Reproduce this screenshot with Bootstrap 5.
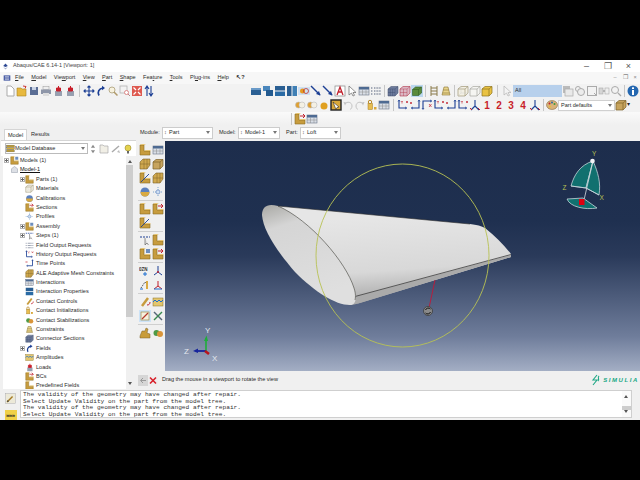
<!DOCTYPE html>
<html lang="en">
<head>
    <meta charset="UTF-8">
    <meta name="viewport" content="width=device-width, initial-scale=1.0">
    <title>Abaqus/CAE 6.14-1</title>
    <link href="https://cdn.jsdelivr.net/npm/bootstrap@5.3.0/dist/css/bootstrap.min.css" rel="stylesheet">
    <style>
        html, body { background: #000; margin: 0; overflow: hidden; }
        .cae-window { width: 640px; height: 360px; margin-top: 60px; background: #f0f0f0; color: #2a2a2a; font: 5.55px/1 "Liberation Sans", sans-serif; overflow: hidden; }
        .title-strip { height: 12px; background: #fff; padding-left: 2px; padding-right: 1px; color: #444; }
        .title-strip .win-btn { width: 21px; text-align: center; font-size: 9px; color: #555; }
        .menu-strip { height: 12px; background: #f7f7f7; padding-left: 3px; }
        .menu-strip span.entry { padding-left: 4px; padding-right: 3.4px; }
        .menu-strip .mdi { width: 10px; text-align: center; color: #888; }
        .tool-strip { height: 14px; background: #f2f2f2; }
        .strip-low { height: 13px; background: linear-gradient(#fafafa, #f0f0f0); }
        .tool { width: 12px; height: 12px; flex: none; display: block; }
        .ic-7 { width: 7px; height: 7px; }
        .ic-8 { width: 8px; height: 8px; }
        .ic-9 { width: 9px; height: 9px; }
        .ic-narrow { width: 10px; }
        .ic-msg { width: 11px; height: 13px; }
        .tool-sep { width: 1px; height: 12px; background: #c6c6c6; margin: 0 2px; flex: none; }
        .sep-wide { margin: 0 3px; }
        .sep-far { margin: 0 3px 0 4px; }
        .pad-a { width: 4px; flex: none; }
        .pad-b { width: 95px; flex: none; }
        .pad-c { width: 294px; flex: none; }
        .pad-d { width: 289px; flex: none; }
        .all-box { width: 49px; height: 12px; background: #b7d0ec; padding: 3px 2px; flex: none; }
        .combo-flat { width: 57px; height: 11px; background: #fff; border: 1px solid #d0d0d0; padding: 2px 2px; flex: none; position: relative; }
        .combo-flat::after, .mod-combo::after, .db-combo::after { content: ""; position: absolute; right: 2px; top: 3px; border: 2.5px solid transparent; border-top: 3px solid #777; }
        .main-area { height: 264px; }
        .left-pane { width: 136px; flex: none; background: #f0f0f0; }
        .tab-row { height: 15px; padding: 4px 0 0 4px; }
        .tab-on, .tab-off { height: 11px; padding: 3px 3px 0; }
        .tab-on { background: #fff; border: 1px solid #d5d5d5; border-bottom: 0; }
        .tab-off { background: #f0f0f0; padding-left: 4px; }
        .db-row { height: 16px; background: #fff; border-top: 1px solid #d5d5d5; padding: 2px 3px 0 4px; margin-left: 1px; }
        .db-combo { width: 83px; height: 11px; background: #fff; border: 1px solid #bbb; position: relative; flex: none; }
        .tree-box { height: 233px; margin: 0 3px 0 3px; background: #fff; overflow: hidden; position: relative; }
        .tree-line { height: 9.4px; white-space: nowrap; position: relative; line-height: 9.4px; }
        .tree-line svg { width: 9px; height: 9px; position: absolute; top: 0; }
        .tree-line .plus { position: absolute; width: 5px; height: 5px; border: 1px solid #b5b5b5; top: 2px; }
        .tree-line .plus::before { content: ""; position: absolute; left: 0; width: 3px; top: 1px; height: 1px; background: #666; }
        .tree-line .plus::after { content: ""; position: absolute; top: 0; height: 3px; left: 1px; width: 1px; background: #666; }
        .tree-line b { font-weight: 400; position: absolute; left: 33px; }
        .depth-top b { left: 17px; }
        .depth-top svg { left: 7px; }
        .depth-kid svg { left: 22px; }
        .depth-kid .plus { left: 17px; }
        .depth-top .plus { left: 1px; }
        .under-mark b { text-decoration: underline; text-decoration-thickness: 1px; color: #111; }
        .scroll-rail { position: absolute; right: 0; top: 0; bottom: 0; width: 7px; background: #f0f0f0; }
        .scroll-thumb { position: absolute; left: 0; right: 0; top: 9px; height: 152px; background: #cdcdcd; }
        .scroll-rail i { position: absolute; left: 1.5px; border: 2px solid transparent; }
        .rail-up { top: 2px; border-bottom: 3px solid #555 !important; }
        .rail-down { bottom: 2px; border-top: 3px solid #555 !important; }
        .mod-row { height: 16px; padding: 2px 0 0 4px; background: #f0f0f0; }
        .mod-combo { height: 12px; background: #fff; border: 1px solid #ccc; padding: 2px 0 0 6px; margin-right: 6px; position: relative; flex: none; }
        .mod-combo::before { content: "\2195"; position: absolute; left: 1px; top: 2px; color: #555; }
        .mod-label { padding-top: 3px; flex: none; }
        .lab-module { width: 22px; }
        .lab-model { width: 19px; }
        .lab-part { width: 14px; }
        .w-part { width: 51px; }
        .w-model { width: 42px; }
        .w-loft { width: 41px; }
        .work-row { height: 230px; }
        .tool-box { width: 29px; flex: none; padding: 1px 2px 0; }
        .box-grid { display: grid; grid-template-columns: 13px 13px; gap: 2px 0; border-bottom: 1px solid #cfcfcf; padding: 2px 0; justify-items: center; }
        .box-grid:last-child { border: 0; }
        .box-grid .tool { width: 12px; height: 12px; }
        .picked { background: #cde3f7; }
        .view-area { flex: 1; position: relative; background: linear-gradient(#1d2d4c 0%, #1f3050 35%, #2a3a5a 50%, #6f7d9b 85%, #a3aec4 100%); overflow: hidden; }
        .view-area svg { display: block; width: 475px; height: 230px; }
        .view-area text { font: 8px "Liberation Sans", sans-serif; }
        .view-area text.cube-mark { font-size: 6.5px; }
        .prompt-bar { height: 18px; padding: 0 1px 0 2px; }
        .prompt-btn { width: 10px; height: 11px; flex: none; }
        .simulia-word { color: #20a886; font: italic 700 6px "Liberation Sans", sans-serif; letter-spacing: 1.6px; padding-left: 2px; }
        .msg-row { height: 31px; padding-left: 3px; }
        .msg-icons { width: 17px; flex: none; padding: 3px 3px 0 2px; gap: 5px; }
        .msg-go { height: 10px; background: #f0d048; color: #222; font-weight: 700; font-size: 6px; padding: 2px 0 0 1px; letter-spacing: -.5px; }
        .msg-text { width: 612px; height: 28px; margin-top: 1px; background: #fff; border: 1px solid #cfcfcf; font: 6.17px/6.55px "Liberation Mono", monospace; padding: 1px 2px; color: #333; position: relative; }
        .msg-text .scroll-rail { right: 0; width: 9px; background: #fafafa; }
        .msg-text .scroll-thumb { top: 15px; height: 4px; }
    </style>
</head>
<body>
<svg width="0" height="0" class="position-absolute">
    <defs>
        <symbol id="new" viewBox="0 0 12 12"><path d="M3 1h4l3 3v7H3z" fill="#fff" stroke="#aaa"/></symbol>
        <symbol id="open" viewBox="0 0 12 12"><path d="M1 3h4l1 1h4v7H1z" fill="#e8b93e" stroke="#a98324" stroke-width=".6"/><path d="M7 1l3 .5-1 2" fill="none" stroke="#c33"/></symbol>
        <symbol id="save" viewBox="0 0 12 12"><rect x="2" y="2" width="8" height="8" fill="#5a6d94"/><rect x="4" y="2" width="4" height="3" fill="#c8d2e4"/></symbol>
        <symbol id="print" viewBox="0 0 12 12"><rect x="3" y="1.500" width="6" height="3" fill="#eee" stroke="#999" stroke-width=".5"/><rect x="1" y="4.500" width="10" height="4.500" fill="#8e96a8"/><rect x="3" y="8" width="6" height="3" fill="#ddd"/></symbol>
        <symbol id="pr1" viewBox="0 0 12 12"><rect x="3" y="6" width="7" height="5" fill="#98a0b0"/><path d="M6.500 1v4M4.500 3h4v3h-4z" stroke="#c81e2a" fill="#c81e2a"/></symbol>
        <symbol id="pan" viewBox="0 0 12 12"><path d="M6 1v10M1 6h10M4.500 2.500L6 1l1.500 1.500M4.500 9.500L6 11l1.500-1.500M2.500 4.500L1 6l1.500 1.500M9.500 4.500L11 6 9.500 7.500" fill="none" stroke="#1c3f94" stroke-width="1.100"/></symbol>
        <symbol id="rot" viewBox="0 0 12 12"><path d="M4 10.500C2 7 4 3.500 8 3" fill="none" stroke="#1c3f94" stroke-width="1.700"/><path d="M7 .8L10 3 7 5.200z" fill="#1c3f94"/></symbol>
        <symbol id="mag" viewBox="0 0 12 12"><circle cx="5" cy="5" r="3" fill="#f7f2df" stroke="#b9ae8c"/><path d="M7 7l3.500 3.500" stroke="#b09a6a" stroke-width="1.500"/></symbol>
        <symbol id="bmag" viewBox="0 0 12 12"><rect x="1" y="1" width="7" height="7" fill="none" stroke="#aaa" stroke-width=".7"/><circle cx="7.500" cy="7.500" r="2" fill="#fff" stroke="#d88"/><path d="M9 9l2 2" stroke="#b88"/></symbol>
        <symbol id="fit" viewBox="0 0 12 12"><rect x="1" y="1" width="10" height="10" fill="#de5a50"/><path d="M2.500 2.500l2.500 2.500M9.500 2.500L7 5M2.500 9.500L5 7M9.500 9.500L7 7" stroke="#fff" stroke-width="1.200"/></symbol>
        <symbol id="cyc" viewBox="0 0 12 12"><path d="M4 11V2M2 4l2-3 2 3M8 1v9M6 8l2 3 2-3" fill="none" stroke="#1c3f94" stroke-width="1.100"/></symbol>
        <symbol id="win1" viewBox="0 0 12 12"><rect x="1" y="3" width="10" height="7" fill="#2a5f93"/><rect x="1" y="3" width="10" height="2" fill="#6a9ac8"/></symbol>
        <symbol id="win2" viewBox="0 0 12 12"><rect x="1" y="1" width="7" height="5" fill="#4a86bc"/><rect x="4" y="5" width="7" height="6" fill="#235a8f"/></symbol>
        <symbol id="win3" viewBox="0 0 12 12"><rect x="1" y="1" width="10" height="4.500" fill="#2a5f93"/><rect x="1" y="6.500" width="10" height="4.500" fill="#2a6ba5"/></symbol>
        <symbol id="win4" viewBox="0 0 12 12"><rect x="1" y="1" width="4.500" height="10" fill="#2a5f93"/><rect x="6.500" y="1" width="4.500" height="10" fill="#3f7fb5"/></symbol>
        <symbol id="coin" viewBox="0 0 12 12"><rect x="0" y="2" width="12" height="8" fill="#cfe0f2"/><circle cx="4.500" cy="6" r="2.500" fill="#e69a22"/><circle cx="8" cy="6" r="2.500" fill="none" stroke="#b33" stroke-width=".8"/></symbol>
        <symbol id="coin2" viewBox="0 0 12 12"><circle cx="4.500" cy="6" r="3" fill="#e0a030" stroke="#bbb" stroke-width=".6"/><circle cx="8" cy="6" r="3" fill="#f4f0e4" stroke="#bbb" stroke-width=".6"/></symbol>
        <symbol id="arrowline" viewBox="0 0 12 12"><path d="M1 1l9 9" stroke="#1c3f94" stroke-width="1.400"/><path d="M10.500 10.500L6 9l3-3z" fill="#1c3f94"/></symbol>
        <symbol id="abox" viewBox="0 0 12 12"><rect x="1" y="1" width="10" height="10" fill="#fff" stroke="#888" stroke-width=".7"/><path d="M3 10l3-8 3 8M4.200 7h3.600" fill="none" stroke="#c0202c" stroke-width="1.300"/></symbol>
        <symbol id="cur" viewBox="0 0 12 12"><path d="M3 1v9l2.500-2 1.500 3 1.500-.7L7 7.500h3z" fill="#fff" stroke="#666" stroke-width=".7"/></symbol>
        <symbol id="grid" viewBox="0 0 12 12"><rect x="1" y="2" width="10" height="8" fill="#d9dee6" stroke="#6a7488" stroke-width=".6"/><rect x="1" y="2" width="10" height="2.500" fill="#4e6a92"/><path d="M1 7h10M4.500 4.500V10M8 4.500V10" stroke="#888" stroke-width=".5"/></symbol>
        <symbol id="list" viewBox="0 0 12 12"><path d="M1 3h2M4 3h7M1 6h2M4 6h7M1 9h2M4 9h7" stroke="#55617a" stroke-dasharray="1 .6"/></symbol>
        <symbol id="cube1" viewBox="0 0 12 12"><path d="M1 4l3-2.500h7V8l-3 3H1z" fill="#6d7b9c" stroke="#3d4a68" stroke-width=".5"/><path d="M1 4h7v7M8 4l3-2.500M3.300 4v7M5.600 4v7M1 7.500h7" stroke="#39486a" stroke-width=".4" fill="none"/></symbol>
        <symbol id="cube2" viewBox="0 0 12 12"><path d="M1 4l3-2.500h7V8l-3 3H1z" fill="#dbb7c4" stroke="#b0344a" stroke-width=".6"/><path d="M1 4h7v7M8 4l3-2.500M4.500 4v7M1 7.500h7" stroke="#b0344a" stroke-width=".4" fill="none"/></symbol>
        <symbol id="cube3" viewBox="0 0 12 12"><rect width="12" height="12" fill="#bcd8ef"/><path d="M1.500 4.500l3-2.500h6v6l-3 2.500h-6z" fill="#5a8a3a" stroke="#2e5a22" stroke-width=".6"/><path d="M1.500 4.500h6v6M7.500 4.500l3-2.500" stroke="#2e5a22" stroke-width=".5" fill="none"/></symbol>
        <symbol id="ladder1" viewBox="0 0 12 12"><path d="M3 1v10M9 1v10M3 3h6M3 6h6M3 9h6" stroke="#8a7a4a" fill="none"/></symbol>
        <symbol id="ladder2" viewBox="0 0 12 12"><path d="M4 2h4l2 8H2z" fill="#e9d58d" stroke="#86702e" stroke-width=".6"/><path d="M3.200 5h5.600M2.600 8h6.800" stroke="#86702e" stroke-width=".6"/></symbol>
        <symbol id="wire" viewBox="0 0 12 12"><path d="M1 4l3-2.500h7V8l-3 3H1z" fill="#f3f0e4" stroke="#a09878" stroke-width=".7"/><path d="M1 4h7v7M8 4l3-2.500" stroke="#a09878" stroke-width=".7" fill="none"/><path d="M4 1.500V8l-3 3M4 8h7" stroke="#ccc" stroke-width=".4" fill="none"/></symbol>
        <symbol id="plain" viewBox="0 0 12 12"><path d="M1 4l3-2.500h7V8l-3 3H1z" fill="#f5f5f2" stroke="#a8a8a0" stroke-width=".7"/><path d="M1 4h7v7M8 4l3-2.500" stroke="#a8a8a0" stroke-width=".7" fill="none"/></symbol>
        <symbol id="gold" viewBox="0 0 12 12"><path d="M1 4l3-2.500h7V8l-3 3H1z" fill="#e9c243" stroke="#8e7420" stroke-width=".7"/><path d="M1 4h7v7M8 4l3-2.500" stroke="#8e7420" stroke-width=".7" fill="none"/></symbol>
        <symbol id="gcur" viewBox="0 0 12 12"><path d="M3 1v9l2.500-2 1.500 3 1.500-.7L7 7.500h3z" fill="#f3f3f3" stroke="#b5b5b5" stroke-width=".7"/></symbol>
        <symbol id="g1" viewBox="0 0 12 12"><rect x="1" y="1" width="7" height="7" fill="#bbb"/><rect x="3" y="4" width="8" height="7" fill="#e9e9e9" stroke="#aaa" stroke-width=".7"/></symbol>
        <symbol id="g2" viewBox="0 0 12 12"><circle cx="4" cy="4" r="2.500" fill="none" stroke="#aaa"/><circle cx="7" cy="7" r="3.500" fill="#ececec" stroke="#aaa"/></symbol>
        <symbol id="g3" viewBox="0 0 12 12"><rect x="1.500" y="1.500" width="9" height="9" fill="none" stroke="#aaa"/><path d="M8 8l3 3" stroke="#aaa"/></symbol>
        <symbol id="g4" viewBox="0 0 12 12"><rect x="1" y="3" width="4" height="6" fill="#d5d5d5" stroke="#aaa" stroke-width=".6"/><rect x="7" y="3" width="4" height="6" fill="#eee" stroke="#aaa" stroke-width=".6"/><path d="M5 6h2" stroke="#888"/></symbol>
        <symbol id="g5" viewBox="0 0 12 12"><circle cx="5" cy="5" r="3.500" fill="none" stroke="#aaa"/><path d="M8 8l3 3" stroke="#aaa" stroke-width="1.300"/></symbol>
        <symbol id="info" viewBox="0 0 12 12"><circle cx="6" cy="6" r="5.500" fill="#2467b0"/><rect x="5" y="5" width="2" height="5" fill="#fff"/><rect x="5" y="2.300" width="2" height="1.700" fill="#fff"/></symbol>
        <symbol id="orange" viewBox="0 0 12 12"><circle cx="6" cy="7" r="3.500" fill="#e0a020"/></symbol>
        <symbol id="hand" viewBox="0 0 12 12"><rect x="1" y="1" width="10" height="10" fill="#d9a83a" stroke="#222" stroke-width="1.400"/><path d="M3 3l6 5-2 .5-1 2z" fill="#fff" stroke="#111" stroke-width=".5"/></symbol>
        <symbol id="undo" viewBox="0 0 12 12"><path d="M3 5c2-3 7-2 7 2 0 2-1 3-2 3.500" fill="none" stroke="#c3c3c3"/><path d="M1.500 3l3 .5-1.500 3z" fill="#c3c3c3"/></symbol>
        <symbol id="redo" viewBox="0 0 12 12"><path d="M9 5C7 2 2 3 2 7c0 2 1 3 2 3.500" fill="none" stroke="#c3c3c3"/><path d="M10.500 3l-3 .5 1.500 3z" fill="#c3c3c3"/></symbol>
        <symbol id="lock" viewBox="0 0 12 12"><circle cx="4" cy="3" r="1.700" fill="none" stroke="#b88a2a"/><rect x="2" y="4.500" width="4.500" height="6" fill="#e8bd50" stroke="#a57e25" stroke-width=".5"/><rect x="8" y="8" width="2.500" height="2.500" fill="#d9a83a"/></symbol>
        <symbol id="ax1" viewBox="0 0 12 12"><path d="M2 1v8h7" fill="none" stroke="#1c3f94" stroke-width="1.100"/><path d="M1 2.500L2 1l1 1.500M8 8l2 1-2 1" fill="none" stroke="#1c3f94" stroke-width=".7"/><path d="M9 2l2 2M11 2L9 4" stroke="#c0202c" stroke-width=".7"/><path d="M4 2l1 1 1-1M5 3v1.500" stroke="#c0202c" stroke-width=".6" fill="none"/></symbol>
        <symbol id="ax2" viewBox="0 0 12 12"><path d="M10 1v8H3" fill="none" stroke="#1c3f94" stroke-width="1.100"/><path d="M9 2.500l1-1.500 1 1.500M4 8L2 9l2 1" fill="none" stroke="#1c3f94" stroke-width=".7"/><path d="M1 3l2 2M3 3L1 5" stroke="#c0202c" stroke-width=".7"/></symbol>
        <symbol id="ax3" viewBox="0 0 12 12"><path d="M2 10V2h8" fill="none" stroke="#1c3f94" stroke-width="1.100"/><path d="M9 1l2 1-2 1M1 9l1 1.500L3 9" fill="none" stroke="#1c3f94" stroke-width=".7"/><path d="M8 5l2.500 3M10.500 5L8 8" stroke="#c0202c" stroke-width=".7"/></symbol>
        <symbol id="tri" viewBox="0 0 12 12"><path d="M6 1v6M6 7l-4 4M6 7l4 4" stroke="#1c3f94" stroke-width="1.100" fill="none"/><path d="M1 9l2 2M9 9l2 2" stroke="#c0202c"/></symbol>
        <symbol id="n1" viewBox="0 0 12 12"><text x="6" y="10" text-anchor="middle" font-family="Liberation Sans" font-weight="700" font-size="10" fill="#c81e2a">1</text></symbol>
        <symbol id="n2" viewBox="0 0 12 12"><text x="6" y="10" text-anchor="middle" font-family="Liberation Sans" font-weight="700" font-size="10" fill="#c81e2a">2</text></symbol>
        <symbol id="n3" viewBox="0 0 12 12"><text x="6" y="10" text-anchor="middle" font-family="Liberation Sans" font-weight="700" font-size="10" fill="#c81e2a">3</text></symbol>
        <symbol id="n4" viewBox="0 0 12 12"><text x="6" y="10" text-anchor="middle" font-family="Liberation Sans" font-weight="700" font-size="10" fill="#c81e2a">4</text></symbol>
        <symbol id="palette" viewBox="0 0 12 12"><ellipse cx="6" cy="6" rx="5.500" ry="4.500" fill="#d8b27a" stroke="#7a5c30" stroke-width=".5"/><circle cx="3.500" cy="4.500" r="1" fill="#c0202c"/><circle cx="6" cy="3.500" r="1" fill="#2a6ba5"/><circle cx="8.500" cy="5" r="1" fill="#3f9a3a"/><circle cx="4" cy="7.500" r="1" fill="#e8c030"/></symbol>
        <symbol id="tan3" viewBox="0 0 12 12"><path d="M1 4l3-2.500h7V8l-3 3H1z" fill="#c7a45e" stroke="#7c6228" stroke-width=".7"/><path d="M1 4h7v7M8 4l3-2.500" stroke="#7c6228" stroke-width=".7" fill="none"/></symbol>
        <symbol id="part" viewBox="0 0 12 12"><path d="M1 11V1h4v6h6v4z" fill="#c79c3e" stroke="#8a6b22" stroke-width=".6"/><path d="M1 1l2-1h4L5 1M5 7l2-1h5l-1 1" fill="#e6c472"/></symbol>
        <symbol id="part-r" viewBox="0 0 12 12"><use href="#part"/><path d="M6 3h5M9 1l2 2-2 2" stroke="#c0202c" fill="none"/></symbol>
        <symbol id="part-b" viewBox="0 0 12 12"><use href="#part"/><rect x="7" y="1" width="4" height="4" fill="#6d8ebd"/></symbol>
        <symbol id="part-s" viewBox="0 0 12 12"><use href="#part"/><path d="M2 10l8-8" stroke="#1c3f94" stroke-width=".9"/></symbol>
        <symbol id="part-m" viewBox="0 0 12 12"><path d="M1 4l3-3h7v6l-3 4H1z" fill="#cfa84e" stroke="#7c6228" stroke-width=".6"/><path d="M5 1v10M8 1v10M1 6h10" stroke="#7c6228" stroke-width=".5"/></symbol>
        <symbol id="ball" viewBox="0 0 12 12"><circle cx="6" cy="6" r="4.500" fill="#5b80bd"/><path d="M1.500 6a4.500 4.500 0 0 0 9 0z" fill="#d9aa42"/></symbol>
        <symbol id="sel" viewBox="0 0 12 12"><path d="M6 1v10M1 6h10" stroke="#7fa6d0" stroke-dasharray="1 1"/><circle cx="6" cy="6" r="2" fill="#cfe0f2" stroke="#5b80bd" stroke-width=".6"/></symbol>
        <symbol id="dash" viewBox="0 0 12 12"><path d="M1 3h10" stroke="#1c3f94" stroke-dasharray="2 1"/><path d="M6 4v7l2-2 1.500 2" fill="#ddd" stroke="#555" stroke-width=".6"/></symbol>
        <symbol id="mesh" viewBox="0 0 12 12"><text x="0" y="6" font-family="Liberation Sans" font-size="4.500" font-weight="700" fill="#333">0ZN</text><path d="M6 7v4M4 9h4" stroke="#1c6fd0"/></symbol>
        <symbol id="tri2" viewBox="0 0 12 12"><path d="M6 1v6M6 7l-4 3M6 7l4 3" stroke="#1c3f94" fill="none"/><circle cx="6" cy="7" r="1" fill="#c0202c"/></symbol>
        <symbol id="tri3" viewBox="0 0 12 12"><path d="M2 9l4-6 3 3" stroke="#555" stroke-dasharray="1.500 1" fill="none"/><rect x="7" y="2" width="2" height="8" fill="#d9aa42"/><path d="M1 10h3" stroke="#1c6fd0"/></symbol>
        <symbol id="tri4" viewBox="0 0 12 12"><path d="M6 2v5M6 7l-4 3M6 7l4 3" stroke="#c0202c" fill="none"/><path d="M2 10h8" stroke="#1c6fd0"/></symbol>
        <symbol id="chain" viewBox="0 0 12 12"><path d="M3 10l6-8" stroke="#c79c3e" stroke-width="2.500"/><path d="M8 9c2 0 3-1 3-3" stroke="#c0202c" fill="none"/></symbol>
        <symbol id="wave" viewBox="0 0 12 12"><rect x="1" y="2" width="10" height="8" fill="#e3c66e" stroke="#8a7020" stroke-width=".5"/><path d="M1 6l2-2 2 2 2-2 2 2 2-2" fill="none" stroke="#1c6fd0"/></symbol>
        <symbol id="pencil" viewBox="0 0 12 12"><rect x="2" y="2" width="8" height="8" fill="#f6f1de" stroke="#9a8a4a" stroke-width=".7"/><path d="M3 9l6-6" stroke="#b23a2a" stroke-width="1.200"/></symbol>
        <symbol id="wrench" viewBox="0 0 12 12"><path d="M2 2l8 8" stroke="#567" stroke-width="1.500"/><path d="M10 2l-8 8" stroke="#3a8a50" stroke-width="1.500"/></symbol>
        <symbol id="hand2" viewBox="0 0 12 12"><path d="M1 9l2-5h3l1-3 2 1-1 4 3 1v4H1z" fill="#c89c3a" stroke="#7c6228" stroke-width=".5"/></symbol>
        <symbol id="hand3" viewBox="0 0 12 12"><circle cx="4.500" cy="6" r="3" fill="#4e9a46"/><circle cx="8" cy="7" r="3" fill="#d9953a"/></symbol>
        <symbol id="db" viewBox="0 0 12 12"><rect x="1" y="1.500" width="10" height="2.500" fill="#d3ad3a" stroke="#333" stroke-width=".4"/><rect x="1" y="4.800" width="10" height="2.500" fill="#d3ad3a" stroke="#333" stroke-width=".4"/><rect x="1" y="8" width="10" height="2.500" fill="#d3ad3a" stroke="#333" stroke-width=".4"/></symbol>
        <symbol id="flash" viewBox="0 0 12 12"><path d="M2 2h3l1 1h4v7H2z" fill="#f1efe6" stroke="#aaa" stroke-width=".7"/></symbol>
        <symbol id="bulb" viewBox="0 0 12 12"><circle cx="6" cy="5" r="3" fill="#e4d24e" stroke="#8a7a20" stroke-width=".5"/><rect x="5" y="8" width="2" height="2.500" fill="#666"/></symbol>
        <symbol id="doc-g" viewBox="0 0 12 12"><path d="M2 9l7-6" stroke="#aaa" stroke-width="1.500"/><path d="M7 9l3 1-1-3" fill="#bbb"/></symbol>
        <symbol id="house" viewBox="0 0 12 12"><path d="M2 10V5l4-3 4 3v5z" fill="#dde0e6" stroke="#a0a6b2" stroke-width=".8"/></symbol>
        <symbol id="updown" viewBox="0 0 12 12"><path d="M6 1L3.500 4.500h5zM6 11L3.500 7.500h5z" fill="#8a8a8a"/></symbol>
        <symbol id="winico" viewBox="0 0 12 12"><rect x="1" y="2" width="10" height="8" fill="#4b5fa6"/><path d="M3 4h6M3 6h6M3 8h6" stroke="#fff" stroke-width=".8"/></symbol>
        <symbol id="logo" viewBox="0 0 12 12"><path d="M6 1l4 4-4 2-4-2z" fill="#2e4a94"/><path d="M2 7l4 4 4-4-4 2z" fill="#9aa6c6"/></symbol>
        <symbol id="pencil-msg" viewBox="0 0 16 16"><rect x="1" y="1" width="14" height="14" fill="#ece9d8" stroke="#aaa" stroke-width=".7"/><path d="M3 13l8-8" stroke="#a37a22" stroke-width="2"/><path d="M3 13l3-.5-2.500-2.500z" fill="#444"/></symbol>
    </defs>
</svg>

<div class="cae-window d-flex flex-column">
    <!-- Title bar -->
    <div class="title-strip d-flex align-items-center">
        <svg class="tool ic-7"><use href="#logo"/></svg>
        <span class="ps-1">Abaqus/CAE 6.14-1 [Viewport: 1]</span>
        <span class="win-btn ms-auto">&#8211;</span><span class="win-btn">&#10064;</span><span class="win-btn">&#215;</span>
    </div>

    <!-- Menu bar -->
    <div class="menu-strip d-flex align-items-center">
        <svg class="tool ic-8"><use href="#winico"/></svg>
        <span class="entry"><u>F</u>ile</span><span class="entry"><u>M</u>odel</span><span class="entry">Vie<u>w</u>port</span><span class="entry"><u>V</u>iew</span><span class="entry"><u>P</u>art</span><span class="entry"><u>S</u>hape</span><span class="entry">Fea<u>t</u>ure</span><span class="entry"><u>T</u>ools</span><span class="entry">Pl<u>u</u>g-ins</span><span class="entry"><u>H</u>elp</span><span class="entry fw-bold">&#8598;?</span>
        <span class="mdi ms-auto">&#8211;</span><span class="mdi">&#10064;</span><span class="mdi">&#215;</span>
    </div>

    <!-- Toolbars -->
    <div class="tool-strip d-flex align-items-center">
        <span class="pad-a"></span>
        <svg class="tool"><use href="#new"/></svg><svg class="tool"><use href="#open"/></svg><svg class="tool"><use href="#save"/></svg><svg class="tool"><use href="#print"/></svg><svg class="tool"><use href="#pr1"/></svg><svg class="tool"><use href="#pr1"/></svg>
        <span class="tool-sep sep-wide"></span>
        <svg class="tool"><use href="#pan"/></svg><svg class="tool"><use href="#rot"/></svg><svg class="tool"><use href="#mag"/></svg><svg class="tool"><use href="#bmag"/></svg><svg class="tool"><use href="#fit"/></svg><svg class="tool"><use href="#cyc"/></svg>
        <span class="pad-b"></span>
        <svg class="tool"><use href="#win1"/></svg><svg class="tool"><use href="#win2"/></svg><svg class="tool"><use href="#win3"/></svg><svg class="tool"><use href="#win4"/></svg><svg class="tool"><use href="#coin"/></svg><svg class="tool"><use href="#arrowline"/></svg><svg class="tool"><use href="#arrowline"/></svg><svg class="tool"><use href="#abox"/></svg><svg class="tool"><use href="#cur"/></svg><svg class="tool"><use href="#grid"/></svg><svg class="tool"><use href="#list"/></svg>
        <span class="tool-sep"></span>
        <svg class="tool"><use href="#cube1"/></svg><svg class="tool"><use href="#cube2"/></svg><svg class="tool"><use href="#cube3"/></svg>
        <span class="tool-sep"></span>
        <svg class="tool"><use href="#ladder1"/></svg><svg class="tool"><use href="#ladder2"/></svg>
        <span class="tool-sep"></span>
        <svg class="tool"><use href="#wire"/></svg><svg class="tool"><use href="#plain"/></svg><svg class="tool"><use href="#gold"/></svg>
        <span class="tool-sep sep-far"></span>
        <svg class="tool"><use href="#gcur"/></svg>
        <span class="all-box">All</span>
        <svg class="tool"><use href="#g1"/></svg><svg class="tool"><use href="#g2"/></svg><svg class="tool"><use href="#g3"/></svg><svg class="tool"><use href="#g4"/></svg><svg class="tool"><use href="#g5"/></svg>
        <span class="tool-sep"></span>
        <svg class="tool"><use href="#info"/></svg>
    </div>
    <div class="tool-strip d-flex align-items-center">
        <span class="pad-c"></span>
        <svg class="tool"><use href="#coin2"/></svg><svg class="tool"><use href="#coin2"/></svg><svg class="tool"><use href="#orange"/></svg><svg class="tool"><use href="#hand"/></svg><svg class="tool"><use href="#undo"/></svg><svg class="tool"><use href="#redo"/></svg><svg class="tool"><use href="#lock"/></svg><svg class="tool"><use href="#grid"/></svg>
        <span class="tool-sep sep-wide"></span>
        <svg class="tool"><use href="#ax1"/></svg><svg class="tool"><use href="#ax2"/></svg><svg class="tool"><use href="#ax3"/></svg><svg class="tool"><use href="#ax1"/></svg><svg class="tool"><use href="#ax2"/></svg><svg class="tool"><use href="#ax1"/></svg><svg class="tool"><use href="#tri"/></svg><svg class="tool"><use href="#n1"/></svg><svg class="tool"><use href="#n2"/></svg><svg class="tool"><use href="#n3"/></svg><svg class="tool"><use href="#n4"/></svg><svg class="tool"><use href="#tri"/></svg>
        <span class="tool-sep"></span>
        <svg class="tool"><use href="#palette"/></svg>
        <span class="combo-flat">Part defaults</span>
        <svg class="tool"><use href="#tan3"/></svg>
        <span class="small-arrow">&#9662;</span>
    </div>
    <div class="tool-strip strip-low d-flex align-items-center">
        <span class="pad-d"></span>
        <span class="tool-sep"></span>
        <svg class="tool"><use href="#part-r"/></svg><svg class="tool"><use href="#grid"/></svg>
    </div>

    <div class="main-area d-flex">
        <!-- Model tree pane -->
        <div class="left-pane d-flex flex-column">
            <div class="tab-row d-flex"><span class="tab-on">Model</span><span class="tab-off">Results</span></div>
            <div class="db-row d-flex align-items-start">
                <span class="db-combo d-flex align-items-center"><svg class="tool ic-9"><use href="#db"/></svg>Model Database</span>
                <svg class="tool ic-narrow"><use href="#updown"/></svg>
                <svg class="tool"><use href="#flash"/></svg>
                <svg class="tool"><use href="#doc-g"/></svg>
                <svg class="tool"><use href="#bulb"/></svg>
            </div>
            <div class="tree-box" id="modelTree">
                <div class="scroll-rail" id="treeRail"><i class="rail-up"></i><div class="scroll-thumb"></div><i class="rail-down"></i></div>
            </div>
        </div>

        <div class="flex-grow-1 d-flex flex-column">
            <!-- Module / Model / Part context bar -->
            <div class="mod-row d-flex align-items-start">
                <span class="mod-label lab-module">Module:</span><span class="mod-combo w-part">Part</span>
                <span class="mod-label lab-model">Model:</span><span class="mod-combo w-model">Model-1</span>
                <span class="mod-label lab-part">Part:</span><span class="mod-combo w-loft">Loft</span>
            </div>

            <div class="work-row d-flex">
                <!-- Module toolbox -->
                <div class="tool-box">
                    <div class="box-grid">
                        <svg class="tool"><use href="#part"/></svg><svg class="tool"><use href="#grid"/></svg>
                        <svg class="tool"><use href="#part-m"/></svg><svg class="tool"><use href="#tan3"/></svg>
                        <svg class="tool"><use href="#part-s"/></svg><svg class="tool"><use href="#part-m"/></svg>
                        <svg class="tool"><use href="#ball"/></svg><svg class="tool"><use href="#sel"/></svg>
                    </div>
                    <div class="box-grid">
                        <svg class="tool"><use href="#part"/></svg><svg class="tool"><use href="#part-r"/></svg>
                        <svg class="tool"><use href="#part-s"/></svg><span></span>
                    </div>
                    <div class="box-grid">
                        <svg class="tool"><use href="#dash"/></svg><svg class="tool"><use href="#part"/></svg>
                        <svg class="tool"><use href="#part-b"/></svg><svg class="tool"><use href="#part-r"/></svg>
                    </div>
                    <div class="box-grid">
                        <svg class="tool"><use href="#mesh"/></svg><svg class="tool"><use href="#tri2"/></svg>
                        <svg class="tool"><use href="#tri3"/></svg><svg class="tool"><use href="#tri4"/></svg>
                    </div>
                    <div class="box-grid">
                        <svg class="tool"><use href="#chain"/></svg><svg class="tool"><use href="#wave"/></svg>
                        <svg class="tool picked"><use href="#pencil"/></svg><svg class="tool"><use href="#wrench"/></svg>
                    </div>
                    <div class="box-grid">
                        <svg class="tool"><use href="#hand2"/></svg><svg class="tool"><use href="#hand3"/></svg>
                    </div>
                </div>

                <!-- Viewport -->
                <div class="view-area">
                    <svg viewBox="165 141 475 230">
                        <defs>
                            <linearGradient id="skin" x1="0.45" y1="0.1" x2="0.6" y2="1">
                                <stop offset="0" stop-color="#e6e6e6"/>
                                <stop offset="0.6" stop-color="#d8d8d8"/>
                                <stop offset="1" stop-color="#9f9f9f"/>
                            </linearGradient>
                            <linearGradient id="rootFace" x1="0" y1="0" x2="0.3" y2="1">
                                <stop offset="0" stop-color="#a8a8a4"/>
                                <stop offset="0.25" stop-color="#d5d5d5"/>
                                <stop offset="1" stop-color="#dfdfdf"/>
                            </linearGradient>
                        </defs>
                        <!-- wing -->
                        <path d="M278 206L470 224Q480 225 485 228Q500 240 511 254L511 257L360 303Q354 305 349 305Z" fill="url(#skin)"/>
                        <path d="M355 297L511 255L511 257L358 303.500L352 304Z" fill="#aaaaaa"/>
                        <path d="M355 296.500L511 254.500" stroke="#3c3c3c" stroke-width=".8" fill="none"/>
                        <path d="M278 206C268 203 262 206 262 215C263 230 276 250 295 272C315 292 335 305 350 305C356 305 357 298 354 288C346 262 310 220 278 206Z" fill="url(#rootFace)"/>
                        <path d="M278 206C310 220 346 262 354 288C356 294 355.500 298 355 300" stroke="#55554f" stroke-width=".7" fill="none"/>
                        <path d="M278 206L470 224" stroke="#2a2a2a" stroke-width=".6" fill="none"/>
                        <ellipse cx="402.500" cy="255.500" rx="86.500" ry="91.500" fill="none" stroke="#b8c254" stroke-width=".9"/>
                        <path d="M435 280L429 308" stroke="#c01838" stroke-width=".9"/>
                        <circle cx="428" cy="311" r="4.500" fill="#8a8a8a" stroke="#333" stroke-width=".7"/>
                        <path d="M425.500 310a3 3 0 0 1 5 -1M430.500 312a3 3 0 0 1 -5 1" stroke="#111" fill="none" stroke-width="1"/>
                        <!-- view triad -->
                        <path d="M206 351L206 338" stroke="#1fae3a" stroke-width="1.600"/><path d="M204 341L206.500 335.500L208 341Z" fill="#1fae3a"/>
                        <path d="M206 351L197 351" stroke="#16249c" stroke-width="1.800"/><path d="M198 348.500L193 351L198 353Z" fill="#16249c"/>
                        <path d="M205 351L209 354" stroke="#b8141c" stroke-width="2.600"/>
                        <text x="205" y="333" fill="#e3e7ee">Y</text>
                        <text x="184" y="354" fill="#e3e7ee">Z</text>
                        <text x="212" y="361" fill="#e3e7ee">X</text>
                        <!-- view cube -->
                        <path d="M593 161C580 165 574 175 571 186L586 188Z" fill="#11706f" stroke="#c5d4da" stroke-width=".8"/>
                        <path d="M593 161C598 172 601 183 599 195L586 188Z" fill="#11706f" stroke="#c5d4da" stroke-width=".8"/>
                        <path d="M571 186L586 188L599 195" fill="none" stroke="#c5d4da" stroke-width=".8"/>
                        <path d="M593 161L584 200" stroke="#d2dae0" stroke-width=".8"/>
                        <path d="M567 199L583 198L597 208C585 210 570 207 567 199Z" fill="#11706f" stroke="#c5d4da" stroke-width=".8"/>
                        <circle cx="592.500" cy="161" r="2.300" fill="#f2f2f6"/>
                        <rect x="579" y="199" width="5.500" height="6" fill="#e00010"/>
                        <text class="cube-mark" x="592" y="156" fill="#b8c254">Y</text>
                        <text class="cube-mark" x="562.500" y="189.500" fill="#b8c254">Z</text>
                        <text class="cube-mark" x="599.500" y="200" fill="#b8c254">X</text>
                    </svg>
                </div>
            </div>

            <!-- Prompt bar -->
            <div class="prompt-bar d-flex align-items-center">
                <svg class="prompt-btn" viewBox="0 0 10 11"><rect width="10" height="11" fill="#d6d6d6"/><path d="M8 5.500H3M5 3L2.500 5.500 5 8" stroke="#999" fill="none"/></svg>
                <svg class="prompt-btn" viewBox="0 0 10 11"><rect width="10" height="11" fill="#eee"/><path d="M2 2.500l6 6M8 2.500l-6 6" stroke="#d8202a" stroke-width="1.600"/></svg>
                <span class="ps-1">Drag the mouse in a viewport to rotate the view</span>
                <span class="ms-auto d-flex align-items-center">
                    <svg class="tool" viewBox="0 0 12 12"><path d="M8 1L4 6h4l-4 5M10 2c-2 2 1 3-1 5" fill="none" stroke="#20a886" stroke-width="1.100"/></svg>
                    <span class="simulia-word">SIMULIA</span>
                </span>
            </div>
        </div>
    </div>

    <!-- Message area -->
    <div class="msg-row d-flex">
        <div class="msg-icons d-flex flex-column">
            <svg class="tool ic-msg"><use href="#pencil-msg"/></svg>
            <span class="msg-go">&#187;&#187;&#187;</span>
        </div>
        <div class="msg-text">
            The validity of the geometry may have changed after repair.<br>
            Select Update Validity on the part from the model tree.<br>
            The validity of the geometry may have changed after repair.<br>
            Select Update Validity on the part from the model tree.
            <div class="scroll-rail"><i class="rail-up"></i><div class="scroll-thumb"></div><i class="rail-down"></i></div>
        </div>
    </div>
</div>

<script src="https://cdn.jsdelivr.net/npm/bootstrap@5.3.0/dist/js/bootstrap.bundle.min.js"></script>
<script>
    // Model tree rows: label, icon, expandable, top level
    const treeRows = [
        ["Models (1)", "part-b", true, true],
        ["Model-1", "house", false, true],
        ["Parts (1)", "part", true],
        ["Materials", "wire"],
        ["Calibrations", "ball"],
        ["Sections", "part-r"],
        ["Profiles", "sel"],
        ["Assembly", "part-b", true],
        ["Steps (1)", "dash", true],
        ["Field Output Requests", "list"],
        ["History Output Requests", "ax1"],
        ["Time Points", "ax2"],
        ["ALE Adaptive Mesh Constraints", "part-m"],
        ["Interactions", "grid"],
        ["Interaction Properties", "win3"],
        ["Contact Controls", "chain"],
        ["Contact Initializations", "lock"],
        ["Contact Stabilizations", "hand3"],
        ["Constraints", "ladder2"],
        ["Connector Sections", "cube1"],
        ["Fields", "rot", true],
        ["Amplitudes", "wave"],
        ["Loads", "pr1"],
        ["BCs", "part-r"],
        ["Predefined Fields", "part"]
    ];

    const treeBox = document.getElementById("modelTree");
    const treeRail = document.getElementById("treeRail");
    treeRows.forEach(([label, icon, expandable, top]) => {
        const row = document.createElement("div");
        row.className = "tree-line " + (top ? "depth-top" : "depth-kid") + (label === "Model-1" ? " under-mark" : "");
        row.innerHTML = `${expandable ? '<span class="plus"></span>' : ""}<svg><use href="#${icon}"/></svg><b>${label}</b>`;
        treeBox.insertBefore(row, treeRail);
    });
</script>
</body>
</html>
